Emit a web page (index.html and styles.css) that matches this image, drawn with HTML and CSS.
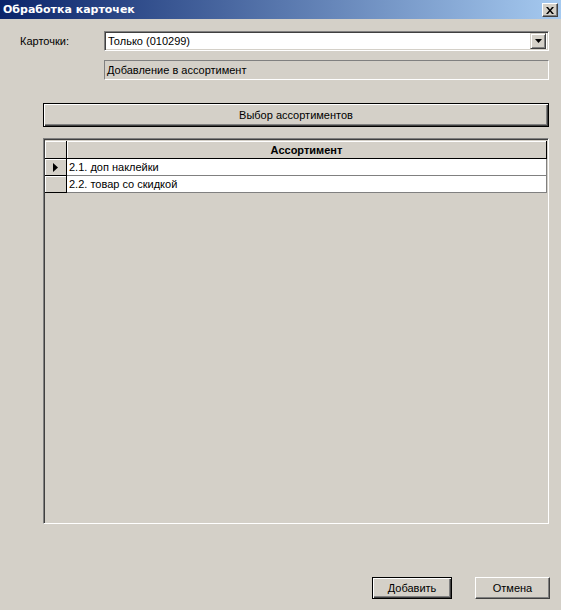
FILE: index.html
```html
<!DOCTYPE html>
<html lang="ru">

<head>
  <meta charset="UTF-8">
  <meta name="viewport" content="width=device-width, initial-scale=1.0">
  <title>Обработка карточек</title>
  <link rel="stylesheet" href="styles.css">
</head>

<body>
  <div class="window">
    <div class="titlebar">
      <span class="title">Обработка карточек</span>
      <button class="close-btn">
        <svg width="8" height="7" viewBox="0 0 8 7">
          <path d="M0 0h2l2 2.5L6 0h2L5 3.5 8 7H6L4 4.5 2 7H0l3-3.5z" fill="#000"/>
        </svg>
      </button>
    </div>

    <div class="field-row">
      <label class="field-label">Карточки:</label>
      <div class="combo">
        <span class="combo-value">Только (010299)</span>
        <span class="combo-btn">
          <svg width="7" height="4" viewBox="0 0 7 4"><path d="M0 0h7L3.5 4z" fill="#000"/></svg>
        </span>
      </div>
    </div>

    <div class="info-row">
      <div class="info-box">Добавление в ассортимент</div>
    </div>

    <div class="pick-row">
      <button class="btn btn-default pick-btn">Выбор ассортиментов</button>
    </div>

    <div class="grid">
      <table class="grid-table">
        <thead>
          <tr>
            <th class="ind"></th>
            <th>Ассортимент</th>
          </tr>
        </thead>
        <tbody>
          <tr>
            <td class="ind">
              <svg width="5" height="9" viewBox="0 0 5 9"><path d="M0 0l5 4.5L0 9z" fill="#000"/></svg>
            </td>
            <td>2.1. доп наклейки</td>
          </tr>
          <tr>
            <td class="ind"></td>
            <td>2.2. товар со скидкой</td>
          </tr>
        </tbody>
      </table>
    </div>

    <div class="footer">
      <button class="btn btn-default add-btn">Добавить</button>
      <button class="btn cancel-btn">Отмена</button>
    </div>
  </div>
</body>

</html>
```

FILE: styles.css
```css
body {
  margin: 0;
  background: #d4d0c8;
  font-family: "Liberation Sans", Arial, sans-serif;
  font-size: 11px;
  color: #000;
}

.window {
  width: 561px;
  height: 610px;
  background: #d4d0c8;
  display: flex;
  flex-direction: column;
}

/* caption */
.titlebar {
  height: 19px;
  display: flex;
  align-items: center;
  justify-content: space-between;
  padding: 0 3px 0 3px;
  background: linear-gradient(to right, #0a246a, #a6caf0);
}

.title {
  color: #fff;
  font-family: "DejaVu Sans", Tahoma, sans-serif;
  font-weight: bold;
  font-size: 11px;
}

.close-btn {
  width: 16px;
  height: 14px;
  padding: 0;
  margin-top: 1px;
  display: flex;
  align-items: center;
  justify-content: center;
  background: #d4d0c8;
  border: 1px solid;
  border-color: #fff #404040 #404040 #fff;
  box-shadow: inset -1px -1px #808080;
}

/* combo row */
.field-row {
  display: flex;
  align-items: center;
  margin: 12px 12px 0 20px;
}

.field-label {
  width: 84px;
}

.combo {
  flex: 1;
  height: 20px;
  box-sizing: border-box;
  display: flex;
  align-items: center;
  justify-content: space-between;
  background: #fff;
  border: 1px solid;
  border-color: #808080 #fff #fff #808080;
  box-shadow: inset 1px 1px #404040, inset -1px -1px #d4d0c8;
  padding: 2px 2px 2px 3px;
}

.combo-btn {
  width: 16px;
  height: 16px;
  box-sizing: border-box;
  display: flex;
  align-items: center;
  justify-content: center;
  background: #d4d0c8;
  border: 1px solid;
  border-color: #d4d0c8 #404040 #404040 #d4d0c8;
  box-shadow: inset 1px 1px #fff, inset -1px -1px #808080;
}

.info-row {
  margin: 9px 12px 0 104px;
}

.info-box {
  height: 20px;
  box-sizing: border-box;
  border: 1px solid;
  border-color: #808080 #fff #fff #808080;
  padding: 2px 2px;
  line-height: 14px;
}

/* buttons */
.btn {
  font-family: "Liberation Sans", Arial, sans-serif;
  font-size: 11px;
  color: #000;
  background: #d4d0c8;
  padding: 0;
  border: 1px solid;
  border-color: #fff #404040 #404040 #fff;
  box-shadow: inset -1px -1px #808080;
}

.btn-default {
  border: 1px solid #000;
  box-shadow: inset 1px 1px #fff, inset -1px -1px #404040, inset -2px -2px #808080;
}

.pick-row {
  margin: 23px 12px 0 43px;
}

.pick-btn {
  width: 100%;
  height: 24px;
  display: block;
}

/* assortment grid */
.grid {
  margin: 11px 12px 0 43px;
  height: 386px;
  box-sizing: border-box;
  border: 1px solid;
  border-color: #808080 #fff #fff #808080;
  box-shadow: inset 1px 1px #404040, inset -1px -1px #d4d0c8;
  padding: 2px 1px 0 1px;
}

.grid-table {
  width: 100%;
  border-collapse: separate;
  border-spacing: 0;
}

.grid-table th,
.grid-table td {
  height: 16px;
  padding: 0 2px;
  text-align: left;
  white-space: nowrap;
}

.grid-table th {
  height: 17px;
  background: #d4d0c8;
  font-weight: bold;
  text-align: center;
  border-right: 1px solid #000;
  border-bottom: 1px solid #000;
  box-shadow: inset 1px 1px #fff;
}

.grid-table td {
  background: #fff;
  border-right: 1px solid #808080;
  border-bottom: 1px solid #808080;
}

.grid-table .ind {
  width: 21px;
  padding: 0;
  text-align: center;
  vertical-align: middle;
  background: #d4d0c8;
  border-right: 1px solid #000;
  border-bottom: 1px solid #000;
  box-shadow: inset 1px 1px #fff;
}

.grid-table td.ind svg {
  display: block;
  margin: 0 auto;
}

.footer {
  display: flex;
  justify-content: flex-end;
  gap: 23px;
  margin-top: 53px;
  padding-right: 11px;
}

.add-btn {
  width: 80px;
  height: 22px;
}

.cancel-btn {
  width: 75px;
  height: 22px;
}
```
